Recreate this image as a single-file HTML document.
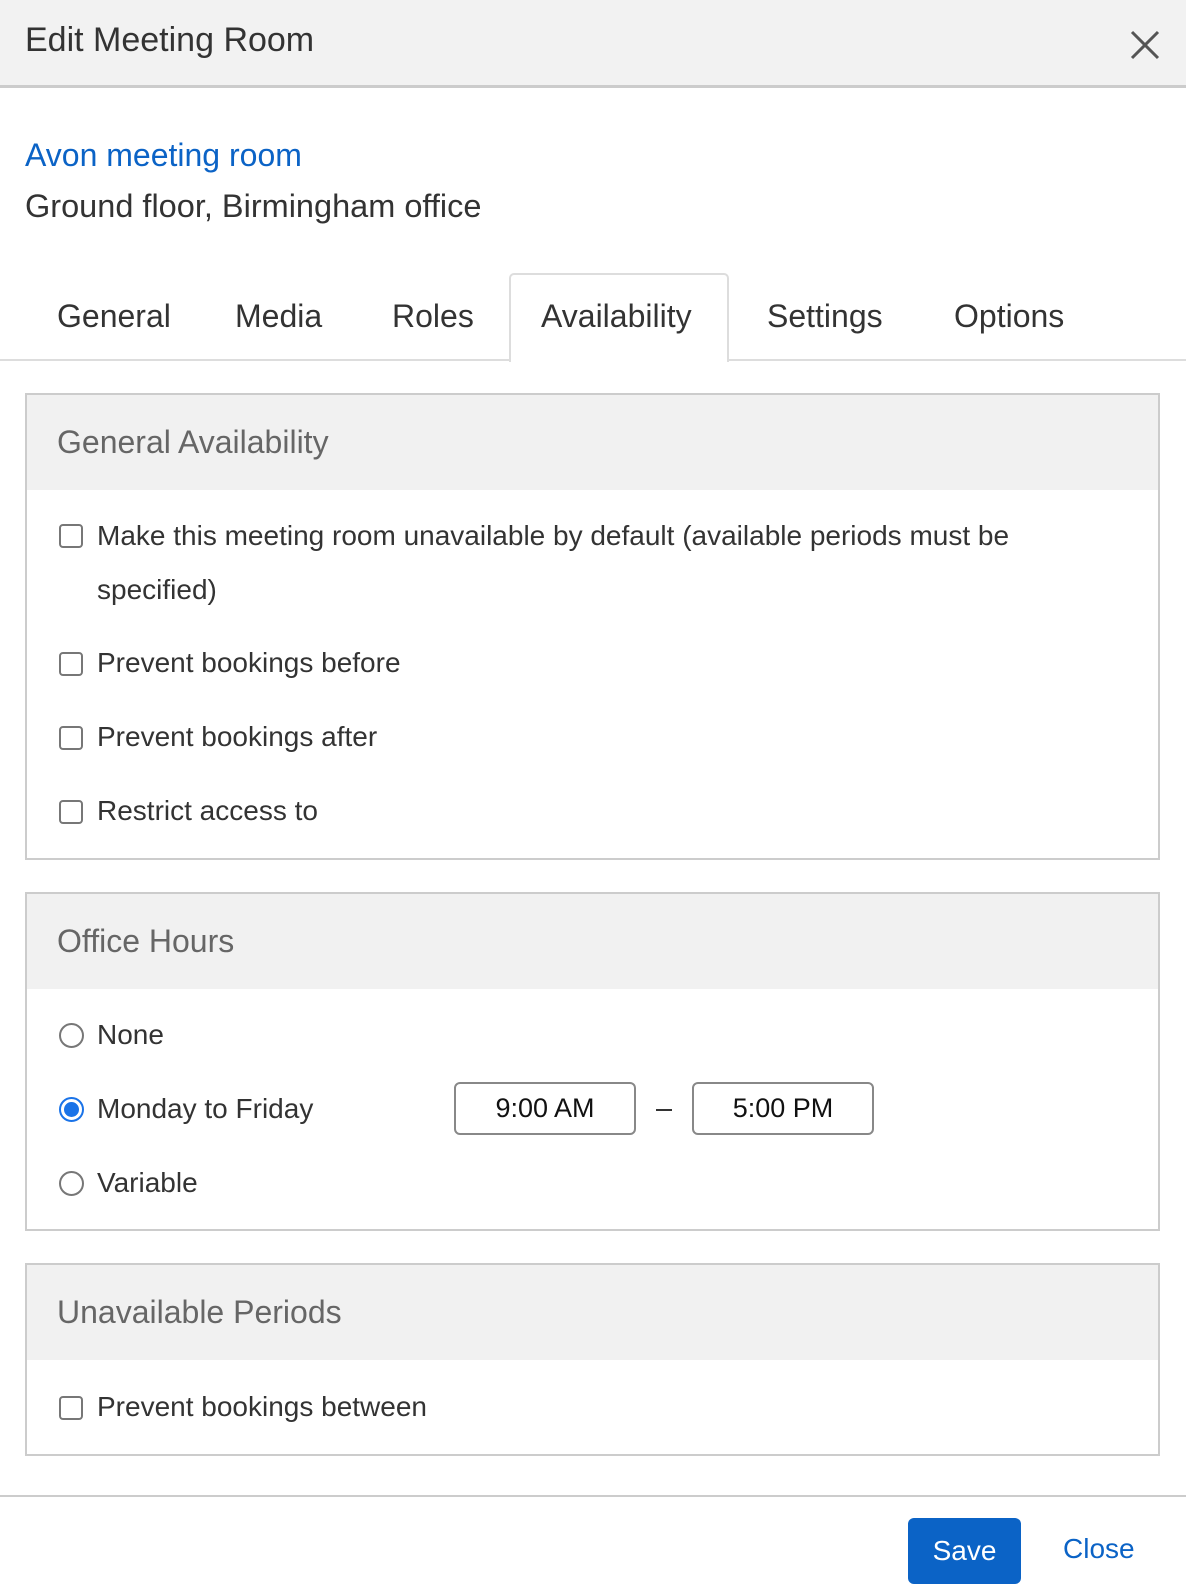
<!DOCTYPE html>
<html><head><meta charset="utf-8"><style>
*{box-sizing:border-box;margin:0;padding:0}
body{width:1186px;height:1595px;background:#fff;font-family:"Liberation Sans",Arial,sans-serif;color:#333;position:relative;overflow:hidden}
.a{position:absolute;white-space:nowrap}
.hdr{left:0;top:0;width:1186px;height:88px;background:#f2f2f2;border-bottom:3px solid #ccc}
.panel{position:absolute;left:25px;width:1135px;border:2px solid #ccc;background:#fff}
.ph{background:#f1f1f1;color:#666;font-size:32px;padding-left:30px}
.cb{position:absolute;left:32px;width:24px;height:24px;border:2px solid #777;border-radius:4px;background:#fff}
.rd{position:absolute;left:32px;width:25px;height:25px;border:2px solid #777;border-radius:50%;background:#fff}
.lbl{position:absolute;left:70px;font-size:28px;color:#333;white-space:nowrap;line-height:30px}
.tab{position:absolute;top:298px;font-size:32px;color:#333}
.tin{position:absolute;top:1082px;width:182px;height:53px;border:2px solid #888;border-radius:6px;font-size:27px;color:#111;text-align:center;line-height:49px}
</style></head><body>
<div class="a hdr"></div>
<div class="a" style="left:25px;top:21px;font-size:34px;color:#333">Edit Meeting Room</div>
<svg class="a" style="left:1130px;top:30px" width="30" height="30" viewBox="0 0 30 30"><path d="M2 2L28 28M28 2L2 28" stroke="#555" stroke-width="3"/></svg>
<div class="a" style="left:25px;top:137px;font-size:32px;color:#0b63c6">Avon meeting room</div>
<div class="a" style="left:25px;top:188px;font-size:32.5px;color:#333">Ground floor, Birmingham office</div>
<div class="a" style="left:0;top:359px;width:1186px;height:2px;background:#ddd"></div>
<div class="a" style="left:509px;top:273px;width:220px;height:89px;border:2px solid #ddd;border-bottom:none;border-radius:5px 5px 0 0;background:#fff"></div>
<div class="tab" style="left:57px">General</div>
<div class="tab" style="left:235px">Media</div>
<div class="tab" style="left:392px">Roles</div>
<div class="tab" style="left:541px">Availability</div>
<div class="tab" style="left:767px">Settings</div>
<div class="tab" style="left:954px">Options</div>

<div class="panel" style="top:393px;height:467px">
 <div class="ph" style="height:95px;line-height:95px">General Availability</div>
 <div class="cb" style="top:129px"></div>
 <div class="lbl" style="top:126px">Make this meeting room unavailable by default (available periods must be</div>
 <div class="lbl" style="top:180px">specified)</div>
 <div class="cb" style="top:257px"></div>
 <div class="lbl" style="top:253px">Prevent bookings before</div>
 <div class="cb" style="top:331px"></div>
 <div class="lbl" style="top:327px">Prevent bookings after</div>
 <div class="cb" style="top:405px"></div>
 <div class="lbl" style="top:401px">Restrict access to</div>
</div>

<div class="panel" style="top:892px;height:339px">
 <div class="ph" style="height:95px;line-height:95px">Office Hours</div>
 <div class="rd" style="top:129px"></div>
 <div class="lbl" style="top:126px">None</div>
 <div class="rd" style="top:203px;border-color:#1a73e8"><div style="position:absolute;left:3px;top:3px;width:15px;height:15px;border-radius:50%;background:#1a73e8"></div></div>
 <div class="lbl" style="top:200px">Monday to Friday</div>
 <div class="rd" style="top:277px"></div>
 <div class="lbl" style="top:274px">Variable</div>
</div>
<div class="tin" style="left:454px">9:00 AM</div>
<div class="a" style="left:656px;top:1109px;width:16px;height:2px;background:#333"></div>
<div class="tin" style="left:692px">5:00 PM</div>

<div class="panel" style="top:1263px;height:193px">
 <div class="ph" style="height:95px;line-height:95px">Unavailable Periods</div>
 <div class="cb" style="top:131px"></div>
 <div class="lbl" style="top:127px">Prevent bookings between</div>
</div>

<div class="a" style="left:0;top:1495px;width:1186px;height:2px;background:#ccc"></div>
<div class="a" style="left:908px;top:1518px;width:113px;height:66px;background:#0b63c6;border-radius:6px;color:#fff;font-size:28px;text-align:center;line-height:66px">Save</div>
<div class="a" style="left:1063px;top:1533px;font-size:28px;color:#0b63c6">Close</div>
</body></html>
